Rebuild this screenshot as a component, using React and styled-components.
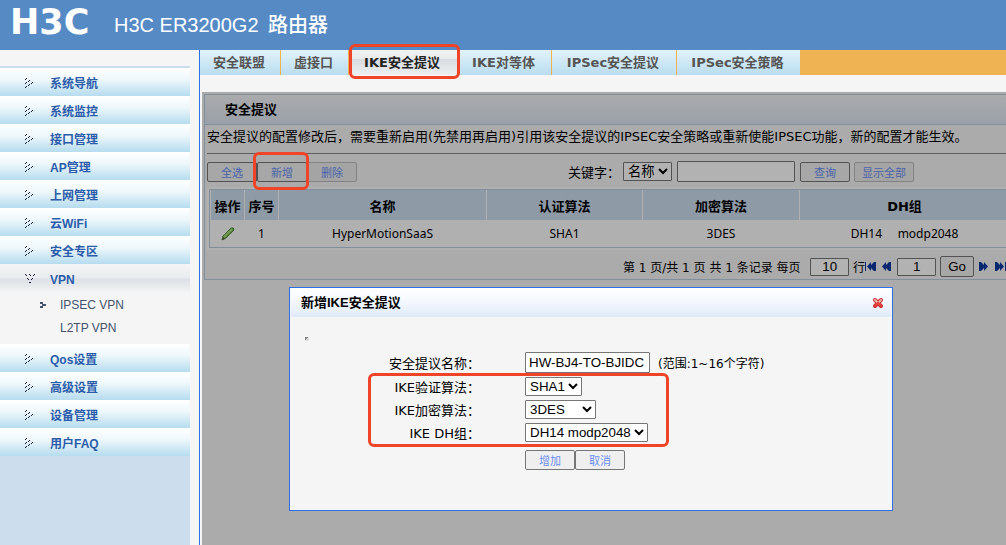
import React from 'react'
import styled, { createGlobalStyle } from 'styled-components'

const GlobalStyle = createGlobalStyle`
  * {
    box-sizing: border-box;
  }
  body {
    margin: 0;
    overflow: hidden;
    background: #f5f5f5;
    font-family: 'DejaVu Sans', 'Noto Sans CJK SC', sans-serif;
    font-size: 13px;
    color: #000;
  }
`

const Page = styled.div`
  display: flex;
  flex-direction: column;
  height: 100vh;
`

const Header = styled.header`
  display: flex;
  align-items: center;
  gap: 20px;
  flex: none;
  height: 50px;
  padding-left: 10px;
  background: #568ac5;
  color: #fff;
`

const Logo = styled.span`
  width: 84px;
  padding-bottom: 6px;
  font-family: 'DejaVu Sans', sans-serif;
  font-weight: 700;
  font-size: 35px;
  line-height: 40px;
`

const Model = styled.h1`
  margin: 0;
  font-family: 'Liberation Sans', 'Noto Sans CJK SC', sans-serif;
  font-weight: 400;
  font-size: 20px;
  line-height: 30px;

  span {
    margin-left: 4px;
    font-weight: 500;
  }
`

const Columns = styled.div`
  display: flex;
  flex: 1;
  min-height: 0;
`

const Sidebar = styled.nav`
  flex: none;
  width: 190px;
  margin-right: 9px;
  background: #ccdded;
  font-family: 'Liberation Sans', 'Noto Sans CJK SC', sans-serif;
  font-size: 12px;
`

const SideTop = styled.div`
  height: 16px;
  margin-bottom: 2px;
  background: #f5f5f5;
`

const SideItem = styled.a`
  display: flex;
  align-items: center;
  height: 28px;
  padding: 4px 0 0 25px;
  gap: 15px;
  background: ${p =>
    p.$open
      ? 'linear-gradient(#f4f4f4, #e8ebee 50%, #dde1e5 55%, #f2f3f4)'
      : 'linear-gradient(#ffffff, #eff8fb 40%, #b6dcef)'};
  color: #2a5caa;
  font-weight: 700;
  line-height: 24px;
  text-decoration: none;

  svg {
    margin-bottom: 2px;
  }
`

const SubMenu = styled.div`
  height: 52px;
  padding-top: 1px;
  background: #f5f5f5;
`

const SubItem = styled.a`
  display: flex;
  align-items: center;
  height: 23px;
  padding-left: 40px;
  gap: 14px;
  color: #44546e;
  text-decoration: none;

  &:last-child {
    padding-left: 60px;
  }
`

const Main = styled.main`
  display: flex;
  flex-direction: column;
  flex: 1;
  min-width: 0;
  border-left: 1px solid #2f6fe4;
`

const Tabs = styled.div`
  display: flex;
  flex: none;
  gap: 1px;
  height: 25px;
  background: #efb354;
`

const Tab = styled.a`
  position: relative;
  width: ${p => p.$w}px;
  padding-right: 2px;
  background: ${p =>
    p.$active
      ? 'linear-gradient(#f1f2f3, #e8eaec 35%, #d8dce0 36%, #eceeef)'
      : 'linear-gradient(#e2f2f9, #b9ddef)'};
  color: ${p => (p.$active ? '#222' : '#555')};
  font-weight: 700;
  line-height: 25px;
  text-align: center;
  text-decoration: none;
  white-space: nowrap;
`

/* red frame over the part that has to be noticed */
const Mark = styled.span`
  position: absolute;
  z-index: 3;
  inset: ${p => p.$inset};
  border: 3px solid #f04428;
  border-radius: 6px;
  pointer-events: none;
`

const Work = styled.div`
  position: relative;
  flex: 1;
  min-height: 0;
  margin: 17px 0 0 2px;
  padding: 2px;
`

const Shade = styled.div`
  position: absolute;
  z-index: 2;
  inset: 0;
  background: rgba(0, 0, 0, 0.3);
`

const Panel = styled.section`
  min-width: 812px;
  height: 186px;
  border: 1px solid #b9cde0;
`

const PanelTitle = styled.h2`
  margin: 0;
  padding-left: 20px;
  border-bottom: 1px solid #b9cde0;
  background: linear-gradient(#f5f5f8, #dde6f2);
  font-size: 13px;
  line-height: 29px;
`

const Note = styled.p`
  margin: 0 2px;
  border-bottom: 1px solid #888;
  line-height: 24px;
  padding-bottom: 4px;
  white-space: nowrap;
`

const Toolbar = styled.div`
  display: flex;
  align-items: center;
  height: 33px;
  padding: 2px 2px 0;
`

const Holder = styled.span`
  position: relative;
  display: flex;
`

const Button = styled.button`
  width: ${p => p.$w || 50}px;
  height: 20px;
  margin: 0;
  padding: 0;
  border: 1px solid #767676;
  border-radius: 2px;
  background: #efefef;
  color: #6b90f5;
  font-family: 'Noto Sans CJK SC', sans-serif;
  font-size: 11px;
  line-height: 16px;

  &:disabled {
    border-color: #bbb;
    background: #ebebeb;
  }
`

const Search = styled.form`
  display: flex;
  align-items: center;
  margin-left: 211px;

  label {
    width: 55px;
  }
  input {
    margin: 0 5px;
  }
  button + button {
    margin-left: 4px;
  }
`

const Select = styled.select`
  width: ${p => p.$w}px;
  height: 19px;
  margin: 0;
  padding: 0;
  border: 1px solid #767676;
  border-radius: 1px;
  background-color: #fff;
  color: #000;
  font-family: 'Liberation Sans', 'Noto Sans CJK SC', sans-serif;
`

const Input = styled.input`
  width: ${p => p.$w}px;
  height: ${p => p.$h || 21}px;
  margin: 0;
  padding: 0 3px;
  border: 1px solid #767676;
  border-radius: 1px;
  background: #fff;
  color: #000;
  font-family: 'Liberation Sans', 'Noto Sans CJK SC', sans-serif;
  text-align: ${p => (p.$center ? 'center' : 'left')};
`

const TableFrame = styled.div`
  margin: 0 2px;
  padding: 2px;
  background: #fdfdfd;
`

const Table = styled.table`
  width: 100%;
  border: 1px solid #b9cde0;
  border-collapse: separate;
  border-spacing: 1px 0;
  table-layout: fixed;

  th {
    height: 30px;
    padding: 0;
    background: #ccdded;
  }
  td {
    height: 27px;
    padding: 0;
    font-family: 'Noto Sans', sans-serif;
    font-size: 12px;
    text-align: center;
    white-space: pre;
  }
  svg {
    display: block;
    margin: 0 auto;
  }
`

const Pager = styled.div`
  display: flex;
  align-items: center;
  height: 31px;
  padding: 2px 0 0 418px;
  font-size: 12px;
  white-space: pre;

  label {
    margin-right: 6px;
  }
`

const PageLink = styled.button`
  display: flex;
  width: ${p => p.$w}px;
  padding: 0;
  border: 0;
  background: none;
`

const GoButton = styled.button`
  width: 34px;
  height: 21px;
  margin: 0 5px 0 4px;
  padding: 0;
  border: 1px solid #767676;
  border-radius: 2px;
  background: #efefef;
  color: #000;
  font-family: 'Liberation Sans', sans-serif;
`

const Dialog = styled.section`
  position: absolute;
  top: 195px;
  left: 87px;
  width: 604px;
  height: 224px;
  border: 1px solid #2f6fe4;
  background: #f5f5f5;
`

const DialogHead = styled.header`
  display: flex;
  align-items: center;
  justify-content: space-between;
  height: 29px;
  margin: 0 1px;
  padding: 0 7px 0 10px;
  background: linear-gradient(#ffffff, #f3f7fd 50%, #dfeaf8);

  h2 {
    margin: 0;
    font-family: 'Liberation Sans', 'Noto Sans CJK SC', sans-serif;
    font-size: 13px;
    line-height: 29px;
  }
  button {
    display: flex;
    padding: 0;
    border: 0;
    background: none;
  }
`

const Corner = styled.div`
  width: 4px;
  height: 4px;
  margin: 20px 0 10px 15px;
  background: linear-gradient(135deg, #888 50%, #ddd 50%);
`

const Group = styled.div`
  position: relative;
  margin-top: 1px;
`

const Row = styled.div`
  display: grid;
  grid-template-columns: 190px 1fr;
  column-gap: 45px;
  align-items: center;
  height: 23px;

  label {
    text-align: right;
    white-space: nowrap;
  }
`

const Field = styled.div`
  display: flex;
  align-items: center;
  gap: 8px;
  font-size: 12px;
`

const Actions = styled.div`
  display: flex;
  margin: 6px 0 0 235px;
`

const Arrow = ({ open }) => (
  <svg width="10" height="10" viewBox="0 0 10 10" stroke="#1a1a3a" fill="none">
    {open ? (
      <path d="M0 0l2 2M4 0l2 2M8 2l2-2M2 4l2 2M6 6l2-2M4 8l1 1l1-1" />
    ) : (
      <path d="M0 2l2-2M0 6l2-2M0 10l2-2M3 4l2-2M3 8l2-2M6 6l2-2" />
    )}
  </svg>
)

const SubArrow = () => (
  <svg width="6" height="6" fill="#44546e" shapeRendering="crispEdges">
    <path d="M0 0h3v2h3v2H3v2H0V4h2V2H0z" />
  </svg>
)

const MenuLink = ({ children, open }) => (
  <SideItem href="#" $open={open}>
    <Arrow open={open} />
    {children}
  </SideItem>
)

const Pencil = () => (
  <svg width="14" height="14" viewBox="0 0 14 14">
    <path d="M1 13 L2 9 L10 1 Q13 0 13 3 L5 11 Z" fill="#6fb54a" stroke="#4e8a3c" />
    <path d="M3 10 L11 2" stroke="#a5dc7d" strokeWidth="2" />
    <path d="M1 13 L2 10 L4 12 Z" fill="#6b5a48" />
  </svg>
)

const Skip = ({ end, flip }) => (
  <svg
    width={end ? 11 : 9}
    height="9"
    viewBox={end ? '0 0 11 9' : '2 0 9 9'}
    fill="#0d3aa0"
    transform={flip ? 'scale(-1 1)' : undefined}
  >
    {end && <path d="M0 0h1v9h-1z" />}
    <path d="M2 4.5L6 0v3L9 0h2v9H9L6 6v3z" />
  </svg>
)

const CloseIcon = () => (
  <svg width="12" height="12" viewBox="0 0 12 12">
    <path d="M3 3 L9 9 M9 3 L3 9" stroke="#c83232" strokeWidth="4" strokeLinecap="round" />
    <path d="M3 3 L5 5 M9 3 L7 5" stroke="#f4b0a8" strokeWidth="2" strokeLinecap="round" />
    <path d="M3 9 L6 6 L9 9" fill="none" stroke="#e4453c" strokeWidth="2" />
  </svg>
)

const App = () => (
  <Page>
    <GlobalStyle />
    <Header>
      <Logo>H3C</Logo>
      <Model>H3C ER3200G2 <span>路由器</span></Model>
    </Header>
    <Columns>
      <Sidebar>
        <SideTop />
        <MenuLink>系统导航</MenuLink>
        <MenuLink>系统监控</MenuLink>
        <MenuLink>接口管理</MenuLink>
        <MenuLink>AP管理</MenuLink>
        <MenuLink>上网管理</MenuLink>
        <MenuLink>云WiFi</MenuLink>
        <MenuLink>安全专区</MenuLink>
        <MenuLink open>VPN</MenuLink>
        <SubMenu>
          <SubItem href="#"><SubArrow />IPSEC VPN</SubItem>
          <SubItem href="#">L2TP VPN</SubItem>
        </SubMenu>
        <MenuLink>Qos设置</MenuLink>
        <MenuLink>高级设置</MenuLink>
        <MenuLink>设备管理</MenuLink>
        <MenuLink>用户FAQ</MenuLink>
      </Sidebar>
      <Main>
        <Tabs>
          <Tab href="#" $w={80}>安全联盟</Tab>
          <Tab href="#" $w={67}>虚接口</Tab>
          <Tab href="#" $w={108} $active>
            IKE安全提议
            <Mark $inset="-6px -3px -4px 0" />
          </Tab>
          <Tab href="#" $w={93}>IKE对等体</Tab>
          <Tab href="#" $w={124}>IPSec安全提议</Tab>
          <Tab href="#" $w={123}>IPSec安全策略</Tab>
        </Tabs>
        <Work>
          <Panel>
            <PanelTitle>安全提议</PanelTitle>
            <Note>
              安全提议的配置修改后，需要重新启用(先禁用再启用)引用该安全提议的IPSEC安全策略或重新使能IPSEC功能，新的配置才能生效。
            </Note>
            <Toolbar>
              <Button>全选</Button>
              <Holder>
                <Button>新增</Button>
                <Mark $inset="-10px -2px -8px -4px" />
              </Holder>
              <Button disabled>删除</Button>
              <Search>
                <label htmlFor="key">关键字：</label>
                <Select id="key" $w={49}>
                  <option>名称</option>
                </Select>
                <Input $w={118} aria-label="关键字" />
                <Button type="button">查询</Button>
                <Button type="button" $w={60} disabled>显示全部</Button>
              </Search>
            </Toolbar>
            <TableFrame>
              <Table>
                <colgroup>
                  <col style={{ width: 33 }} />
                  <col style={{ width: 33 }} />
                  <col style={{ width: 207 }} />
                  <col style={{ width: 155 }} />
                  <col style={{ width: 156 }} />
                  <col />
                </colgroup>
                <thead>
                  <tr>
                    <th>操作</th>
                    <th>序号</th>
                    <th>名称</th>
                    <th>认证算法</th>
                    <th>加密算法</th>
                    <th>DH组</th>
                  </tr>
                </thead>
                <tbody>
                  <tr>
                    <td><Pencil /></td>
                    <td>1</td>
                    <td>HyperMotionSaaS</td>
                    <td>SHA1</td>
                    <td>3DES</td>
                    <td>{'DH14     modp2048'}</td>
                  </tr>
                </tbody>
              </Table>
            </TableFrame>
            <Pager>
              <label htmlFor="size">第 1 页/共 1 页 共 1 条记录 每页 </label>
              <Input id="size" $w={39} $h={18} $center defaultValue="10" />
              <span> 行</span>
              <PageLink $w={17} aria-label="首页"><Skip end /></PageLink>
              <PageLink $w={15} aria-label="上一页"><Skip /></PageLink>
              <Input $w={39} $h={18} $center defaultValue="1" aria-label="页码" />
              <GoButton>Go</GoButton>
              <PageLink $w={16} aria-label="下一页"><Skip flip /></PageLink>
              <PageLink $w={15} aria-label="末页"><Skip end flip /></PageLink>
            </Pager>
          </Panel>
          <Shade>
            <Dialog>
              <DialogHead>
                <h2>新增IKE安全提议</h2>
                <button aria-label="关闭"><CloseIcon /></button>
              </DialogHead>
              <Corner />
              <Row>
                <label htmlFor="name">安全提议名称：</label>
                <Field>
                  <Input id="name" $w={125} defaultValue="HW-BJ4-TO-BJIDC" />
                  (范围:1~16个字符)
                </Field>
              </Row>
              <Group>
                <Row>
                  <label htmlFor="auth">IKE验证算法：</label>
                  <Field><Select id="auth" $w={57}><option>SHA1</option></Select></Field>
                </Row>
                <Row>
                  <label htmlFor="enc">IKE加密算法：</label>
                  <Field><Select id="enc" $w={71}><option>3DES</option></Select></Field>
                </Row>
                <Row>
                  <label htmlFor="dh">IKE DH组：</label>
                  <Field><Select id="dh" $w={123}><option>DH14 modp2048</option></Select></Field>
                </Row>
                <Mark $inset="-2px 223px -3px 78px" />
              </Group>
              <Actions>
                <Button>增加</Button>
                <Button>取消</Button>
              </Actions>
            </Dialog>
          </Shade>
        </Work>
      </Main>
    </Columns>
  </Page>
)

export default App
